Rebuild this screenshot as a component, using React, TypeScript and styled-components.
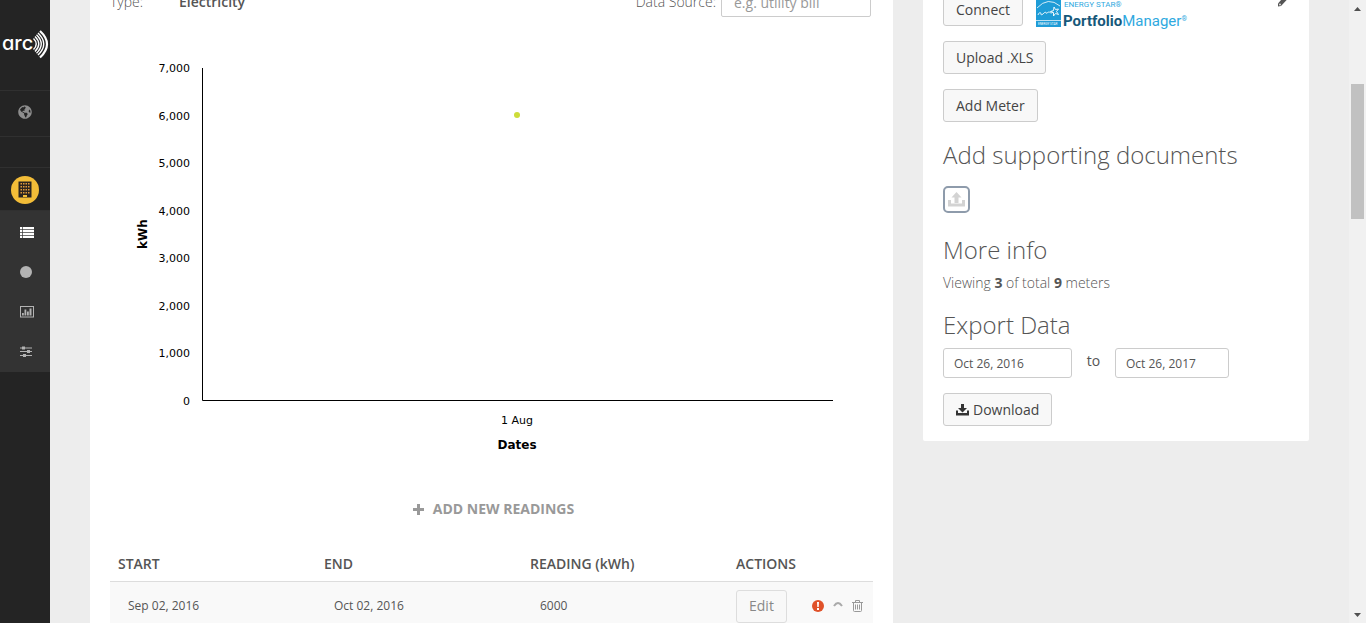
import React from "react";
import styled, { createGlobalStyle } from "styled-components";
import { FaGlobeAmericas } from "react-icons/fa";

const GlobalStyle = createGlobalStyle`
  *, *::before, *::after { box-sizing: border-box; }
  body {
    margin: 0;
    background: #ededed;
    color: #555;
    font: 300 14px/20px "Open Sans", "Liberation Sans", sans-serif;
  }
  button, input { font-family: inherit; }
  svg { display: block; }
`;

const Shell = styled.div`
  display: flex;
  height: 100vh;
  overflow: hidden;
`;

/* ---------- Sidebar ---------- */

const Sidebar = styled.nav`
  flex: 0 0 50px;
  display: flex;
  flex-direction: column;
  background: #242424;
`;

const SideCell = styled.div<{ $height: number }>`
  display: flex;
  align-items: center;
  justify-content: center;
  height: ${(p) => p.$height}px;
  border-bottom: 1px solid #303030;
`;

const SideLink = styled.a`
  display: flex;
  align-items: center;
  justify-content: center;
  color: #8d8d8d;
`;

const WorldLink = styled(SideLink)`
  padding-bottom: 3px;
`;

const SubMenu = styled.div`
  background: #333;
  padding-top: 1px;
`;

const SubLink = styled(SideLink)`
  height: 40px;
  padding-left: 3px;
  color: #b3b3b3;
`;

const ArcText = styled.text`
  font: 500 20px Inter, "Liberation Sans", sans-serif;
  font-feature-settings: "cv11";
  fill: #fff;
`;

/* ---------- Page ---------- */

const Main = styled.main`
  flex: 1;
  min-width: 0;
  overflow: hidden;
`;

const Columns = styled.div`
  display: grid;
  grid-template-columns: minmax(0, 1fr) 386px;
  align-items: start;
  gap: 30px;
  margin-top: -37px;
  padding: 0 40px;
`;

const Card = styled.section`
  background: #fff;
  border-radius: 2px;
  padding: 24px 20px 20px;
`;

const SideCard = styled(Card)`
  padding: 30px 20px 15px;
`;

const MeterFields = styled.div`
  display: flex;
  align-items: center;
  height: 30px;
`;

const TypeLabel = styled.span`
  width: 69px;
`;

const TypeValue = styled.span`
  flex: 1;
  font-weight: 600;
`;

const SourceLabel = styled.label`
  padding-right: 5px;
`;

const TextInput = styled.input`
  width: 150px;
  height: 30px;
  margin-right: 2px;
  padding: 0 12px;
  border: 1px solid #ccc;
  border-radius: 2px;
  font-size: 14px;
  font-weight: 400;
  color: #555;
  &::placeholder { color: #999; opacity: 1; }
`;

const Chart = styled.svg`
  width: 100%;
  height: auto;
  margin-top: 20px;
`;

const ChartLabel = styled.text`
  font: 11px "DejaVu Sans", Verdana, sans-serif;
  fill: #000;
`;

const ChartTitle = styled.text`
  font: bold 12px "DejaVu Sans", Verdana, sans-serif;
  fill: #000;
  text-anchor: middle;
`;

const AddRow = styled.div`
  display: flex;
  justify-content: center;
  margin: 22px 0 28px;
  padding-left: 4px;
`;

const AddReadings = styled.button`
  display: flex;
  align-items: center;
  gap: 9px;
  padding: 0;
  border: 0;
  background: none;
  font-size: 14px;
  font-weight: 700;
  line-height: 20px;
  color: #999;
`;

const Readings = styled.table`
  width: 100%;
  border-collapse: separate;
  border-spacing: 0;
  table-layout: fixed;
`;

const HeadCell = styled.th<{ $wide?: boolean }>`
  width: ${(p) => (p.$wide ? "27%" : "auto")};
  height: 35px;
  padding: 0 8px;
  border-bottom: 1px solid #ddd;
  text-align: left;
  font-weight: 600;
`;

const Cell = styled.td<{ $inset?: boolean }>`
  height: 48px;
  padding: 0 ${(p) => (p.$inset ? 18 : 8)}px;
  background: #f9f9f9;
  font-size: 12px;
  font-weight: 400;
`;

const Actions = styled.div`
  display: flex;
  align-items: center;
`;

const Button = styled.button<{ $muted?: boolean }>`
  display: inline-flex;
  align-items: center;
  gap: 4px;
  height: 33px;
  padding: 0 12px;
  border: 1px solid ${(p) => (p.$muted ? "#ddd" : "#ccc")};
  border-radius: 3px;
  background: #f8f8f8;
  font-size: 14px;
  font-weight: 400;
  line-height: 20px;
  color: ${(p) => (p.$muted ? "#888" : "#444")};
`;

const IconButton = styled.button<{ $space: number }>`
  margin-left: ${(p) => p.$space}px;
  padding: 0;
  border: 0;
  background: none;
`;

/* ---------- Right column ---------- */

const ButtonStack = styled.div`
  display: flex;
  flex-direction: column;
  align-items: flex-start;
  gap: 15px;
`;

const ConnectRow = styled.div`
  display: flex;
  align-items: flex-start;
  width: 100%;
  height: 33px;
`;

const LogoBox = styled.span`
  flex: 1;
  padding-left: 13px;
`;

const LogoText = styled.text<{ $size: number; $bold?: boolean; $color?: string }>`
  font-family: Roboto, "Liberation Sans", sans-serif;
  font-size: ${(p) => p.$size}px;
  font-weight: ${(p) => (p.$bold ? 700 : 400)};
  fill: ${(p) => p.$color || "#2fa9e0"};
`;

const Heading = styled.h2`
  margin: 20px 0 10px;
  font-size: 24px;
  font-weight: 300;
  line-height: 26px;
`;

const UploadButton = styled.button`
  display: flex;
  align-items: center;
  justify-content: center;
  width: 27px;
  height: 27px;
  margin: 18px 0 24px;
  padding: 0;
  border: 2px solid #8e9bab;
  border-radius: 5px;
  background: #fff;
  color: #d3d3d3;
`;

const Info = styled.p`
  margin: 0;
  line-height: 19px;
  strong { font-weight: 700; }
`;

const DateRange = styled.div`
  display: flex;
  margin-bottom: 15px;
`;

const DateInput = styled.input<{ $width: number }>`
  width: ${(p) => p.$width}px;
  height: 30px;
  padding: 0 10px;
  border: 1px solid #ccc;
  border-radius: 3px;
  font-size: 12px;
  font-weight: 400;
  color: #555;
`;

const RangeWord = styled.span`
  width: 43px;
  padding-top: 3px;
  text-align: center;
  font-weight: 400;
`;

/* ---------- Scroll bar ---------- */

const ScrollBar = styled.div`
  flex: 0 0 17px;
  display: flex;
  flex-direction: column;
  background: #f1f1f1;
`;

const ScrollArrow = styled.div`
  display: flex;
  align-items: center;
  justify-content: center;
  height: 17px;
`;

const ScrollTrack = styled.div`
  flex: 1;
  padding: 67px 2px 0;
`;

const ScrollThumb = styled.div`
  height: 135px;
  background: #c1c1c1;
`;

/* ---------- Drawings ---------- */

const ArcLogo = () => (
  <svg width="50" height="32" viewBox="0 0 50 32" role="img" aria-label="arc">
    <ArcText x="2" y="21">arc</ArcText>
    <g fill="none" stroke="#fff" strokeWidth="1.400">
      <path d="M33.500 9.500Q39 15 33.500 20.500" />
      <path d="M35 7.500Q42.500 15 35 22.500" />
      <path d="M36.500 5.700Q46 15 36.500 24.300" />
      <path d="M38 4Q49.500 15 38 26" />
      <path d="M40 2Q54 15 40 28.500" strokeWidth="2.200" />
    </g>
  </svg>
);

const BuildingIcon = () => (
  <svg width="28" height="30" viewBox="0 0 28 30">
    <circle cx="14" cy="16" r="14" fill="#f3bd38" />
    <path d="M7.500 7.500h13v16h-13z" fill="#2b2420" />
    <g fill="#e0993a">
      {[9, 12, 15, 18].map((y) =>
        [9.500, 12, 14.500, 17].map((x) => <rect key={`${x}-${y}`} x={x} y={y} width="1.500" height="1.500" />)
      )}
    </g>
    <path d="M12 21h4v2h-4z" fill="#f3bd38" />
  </svg>
);

const ListIcon = () => (
  <svg width="14" height="11" viewBox="0 0 14 11" fill="#fff">
    <path d="M0 0h14v11H0z" />
    <path d="M0 2.500h14M0 5.500h14M0 8.500h14M2.500 0v11" stroke="#333" strokeWidth="0.700" />
  </svg>
);

const DotIcon = () => (
  <svg width="14" height="12" viewBox="0 0 14 12">
    <circle cx="6" cy="6" r="6" fill="#b3b3b3" />
  </svg>
);

const ChartIcon = () => (
  <svg width="14" height="12" viewBox="0 0 14 12">
    <rect x="0.500" y="0.500" width="13" height="10.500" fill="none" stroke="#b3b3b3" />
    <path d="M2 7h1.800v2.500H2zM4.500 3.500h1.800v6H4.500zM7 5.500h1.800v4H7zM9.500 2.500h2v7h-2z" fill="#b3b3b3" />
  </svg>
);

const SlidersIcon = () => (
  <svg width="14" height="12" viewBox="0 0 14 12" fill="#b3b3b3">
    <path d="M0 1.500h12v1H0zM0 5h12v1H0zM0 9h12v1H0z" />
    <path d="M2 .5h3v3H2zM7 4h3v3H7zM3 8h3v3H3z" />
  </svg>
);

const PlusIcon = () => (
  <svg width="11" height="11" viewBox="0 0 11 11" fill="#999">
    <path d="M4 0h3v4h4v3H7v4H4V7H0V4h4z" />
  </svg>
);

const AlertIcon = () => (
  <svg width="12" height="12" viewBox="0 0 12 12">
    <circle cx="6" cy="6" r="6" fill="#e0522a" />
    <path d="M5 2h2l-.3 5H5.300zM5 8h2v2H5z" fill="#fff" />
  </svg>
);

const CaretIcon = () => (
  <svg width="10" height="12" viewBox="0 0 10 12">
    <path d="M1 6Q5 0 9 6" fill="none" stroke="#aaa" strokeWidth="2" />
  </svg>
);

const TrashIcon = () => (
  <svg width="11" height="14" viewBox="0 0 11 14" fill="none" stroke="#999">
    <path d="M0 3.500h11M3.500 3V1.500h4V3M1.500 4v7.500q0 1 1 1h6q1 0 1-1V4M3.500 5.500v5M5.500 5.500v5M7.500 5.500v5" />
  </svg>
);

const UploadIcon = () => (
  <svg width="17" height="15" viewBox="0 0 17 15" fill="currentColor">
    <path d="M8.500 0l5 5.500h-3V11h-4V5.500h-3z" />
    <path d="M0 8h3v3.500h11V8h3v6.500H0z" />
  </svg>
);

const DownloadIcon = () => (
  <svg width="13" height="12" viewBox="0 0 13 12" fill="#333">
    <path d="M5 0h3v4h3L6.500 8.500 2 4h3z" />
    <path d="M0 6.500h2V9h9V6.500h2v5H0z" />
  </svg>
);

const PencilIcon = () => (
  <svg width="11" height="14" viewBox="0 0 11 14">
    <path d="M0 10.500 7.500 2l3 3-7.500 8-3 .5z" fill="#555" />
    <circle cx="2" cy="11.500" r="1" fill="#ddd" />
  </svg>
);

const PortfolioLogo = () => (
  <svg width="155" height="42" viewBox="0 0 155 42" role="img" aria-label="Energy Star Portfolio Manager">
    <rect width="25" height="34" fill="#1e9cd7" />
    <path d="M1 15Q12 3 24 13" fill="none" stroke="#fff" strokeWidth="0.800" />
    <path
      d="M2 22c1-3 3-3 3-1s2 0 3-1 2-1 2 0 2-1 3-1 2 2 4 0M18 14l1.500 2.500 3-.5-2 2.500 2 3-3-1-2 2.500v-3.500l-3-1 3-1z"
      fill="none"
      stroke="#fff"
      strokeWidth="0.900"
    />
    <path d="M0 27.500h25" stroke="#fff" strokeWidth="0.700" />
    <LogoText x="2" y="32" $size={3} $color="#fff">ENERGY STAR</LogoText>
    <LogoText x="28" y="14" $size={8}>ENERGY STAR®</LogoText>
    <LogoText x="27" y="33" $size={15} $bold>
      <tspan fill="#16587a">Portfolio</tspan>
      <tspan fontWeight="400">Manager</tspan>
      <tspan fontSize="7" fontWeight="400" dy="-5">®</tspan>
    </LogoText>
  </svg>
);

const TICKS = ["7,000", "6,000", "5,000", "4,000", "3,000", "2,000", "1,000", "0"];

const ReadingsChart = () => (
  <Chart viewBox="0 0 763 440" role="img" aria-label="Electricity readings in kWh by date">
    {TICKS.map((t, i) => (
      <ChartLabel key={t} x="80" y={Math.round(35 + i * 47.5)} textAnchor="end">{t}</ChartLabel>
    ))}
    <path d="M92.500 31v332.500H723" fill="none" stroke="#000" />
    <circle cx="407" cy="78" r="3" fill="#cddc39" />
    <ChartLabel x="407" y="387" textAnchor="middle">1 Aug</ChartLabel>
    <ChartTitle x="407" y="412">Dates</ChartTitle>
    <ChartTitle transform="translate(37 197) rotate(-90)">kWh</ChartTitle>
  </Chart>
);

export default function App() {
  return (
    <Shell>
      <GlobalStyle />
      <Sidebar>
        <SideCell $height={91}><SideLink href="#home"><ArcLogo /></SideLink></SideCell>
        <SideCell $height={46}>
          <WorldLink href="#world" aria-label="World"><FaGlobeAmericas size={14} /></WorldLink>
        </SideCell>
        <SideCell $height={31} />
        <SideCell $height={43}>
          <SideLink href="#building" aria-label="Building"><BuildingIcon /></SideLink>
        </SideCell>
        <SubMenu>
          <SubLink href="#list" aria-label="Meters"><ListIcon /></SubLink>
          <SubLink href="#score" aria-label="Score"><DotIcon /></SubLink>
          <SubLink href="#analytics" aria-label="Analytics"><ChartIcon /></SubLink>
          <SubLink href="#settings" aria-label="Settings"><SlidersIcon /></SubLink>
        </SubMenu>
      </Sidebar>

      <Main>
        <Columns>
          <Card>
            <MeterFields>
              <TypeLabel>Type:</TypeLabel>
              <TypeValue>Electricity</TypeValue>
              <SourceLabel htmlFor="source">Data Source:</SourceLabel>
              <TextInput id="source" placeholder="e.g. utility bill" />
            </MeterFields>
            <ReadingsChart />
            <AddRow>
              <AddReadings type="button"><PlusIcon />ADD NEW READINGS</AddReadings>
            </AddRow>
            <Readings>
              <thead>
                <tr>
                  <HeadCell $wide>START</HeadCell>
                  <HeadCell $wide>END</HeadCell>
                  <HeadCell $wide>READING (kWh)</HeadCell>
                  <HeadCell>ACTIONS</HeadCell>
                </tr>
              </thead>
              <tbody>
                <tr>
                  <Cell $inset>Sep 02, 2016</Cell>
                  <Cell $inset>Oct 02, 2016</Cell>
                  <Cell $inset>6000</Cell>
                  <Cell>
                    <Actions>
                      <Button type="button" $muted>Edit</Button>
                      <IconButton type="button" $space={25} aria-label="Reading warning"><AlertIcon /></IconButton>
                      <IconButton type="button" $space={9} aria-label="Collapse"><CaretIcon /></IconButton>
                      <IconButton type="button" $space={9} aria-label="Delete"><TrashIcon /></IconButton>
                    </Actions>
                  </Cell>
                </tr>
              </tbody>
            </Readings>
          </Card>

          <SideCard>
            <ButtonStack>
              <ConnectRow>
                <Button type="button">Connect</Button>
                <LogoBox><PortfolioLogo /></LogoBox>
                <IconButton type="button" $space={0} aria-label="Edit connection"><PencilIcon /></IconButton>
              </ConnectRow>
              <Button type="button">Upload .XLS</Button>
              <Button type="button">Add Meter</Button>
            </ButtonStack>
            <Heading>Add supporting documents</Heading>
            <UploadButton type="button" aria-label="Upload document"><UploadIcon /></UploadButton>
            <Heading>More info</Heading>
            <Info>Viewing <strong>3</strong> of total <strong>9</strong> meters</Info>
            <Heading>Export Data</Heading>
            <DateRange>
              <DateInput $width={129} aria-label="Export from" defaultValue="Oct 26, 2016" />
              <RangeWord>to</RangeWord>
              <DateInput $width={114} aria-label="Export until" defaultValue="Oct 26, 2017" />
            </DateRange>
            <Button type="button"><DownloadIcon />Download</Button>
          </SideCard>
        </Columns>
      </Main>

      <ScrollBar aria-hidden="true">
        <ScrollArrow>
          <svg width="7" height="4" viewBox="0 0 7 4"><path d="M0 4 3.500 0 7 4z" fill="#505050" /></svg>
        </ScrollArrow>
        <ScrollTrack><ScrollThumb /></ScrollTrack>
        <ScrollArrow>
          <svg width="7" height="4" viewBox="0 0 7 4"><path d="M0 0h7L3.500 4z" fill="#505050" /></svg>
        </ScrollArrow>
      </ScrollBar>
    </Shell>
  );
}
